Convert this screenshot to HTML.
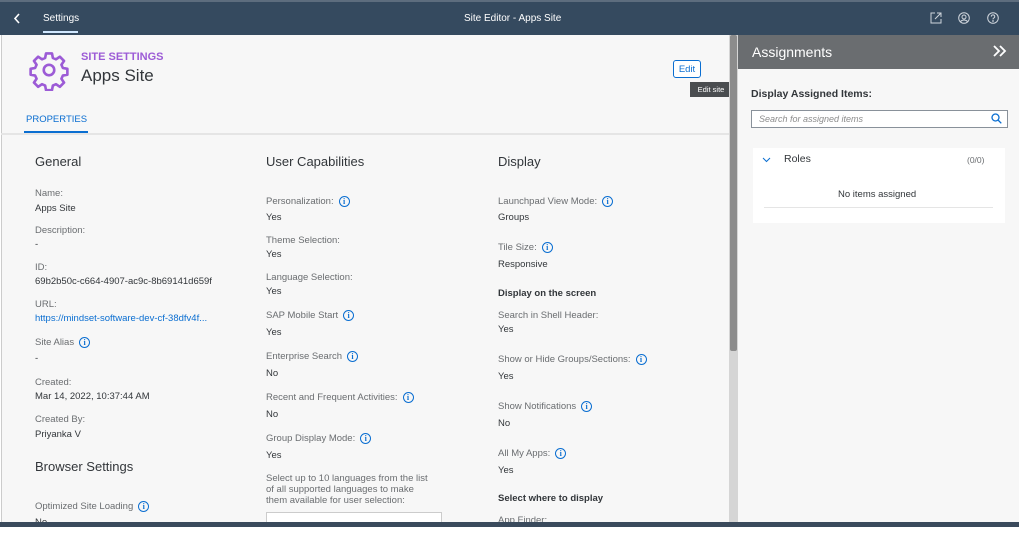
<!DOCTYPE html>
<html><head><meta charset="utf-8"><style>
*{margin:0;padding:0;box-sizing:border-box}
body{width:1024px;height:540px;background:#fff;font-family:"Liberation Sans",sans-serif;position:relative;overflow:hidden}
.a{position:absolute;white-space:nowrap;line-height:14px}
.l{font-size:9.5px;color:#6a6d70}
.v{font-size:9.5px;color:#32363a}
.h{font-size:13px;color:#32363a;line-height:16px}
.b{font-size:9.5px;color:#32363a;font-weight:bold}
.i{display:inline-block;width:11px;height:11px;border:1px solid #0a6ed1;border-radius:50%;font-size:8px;line-height:9px;text-align:center;color:#0a6ed1;margin-left:5px;vertical-align:middle;font-family:"Liberation Serif",serif;font-weight:bold}
.c{position:absolute;left:0;top:1px;width:729px;height:521px;overflow:hidden}
</style></head><body>
<div style="position:absolute;left:0;top:0;width:1019px;height:35px;background:#354a5f;border-top:2px solid #5d6d7e"></div>
<svg style="position:absolute;left:13px;top:13px" width="8" height="11" viewBox="0 0 8 11" fill="none" stroke="#fff" stroke-width="1.6"><path d="M6 1L2 5.5 6 10"/></svg>
<div class="a" style="left:43px;top:12px;color:#fff;font-size:10px">Settings</div>
<div style="position:absolute;left:43px;top:31px;width:35px;height:2px;background:#d1e8ff"></div>
<div class="a" style="left:464px;top:12px;color:#fff;font-size:10px">Site Editor - Apps Site</div>
<svg style="position:absolute;left:930px;top:12px" width="12" height="12" viewBox="0 0 12 12" fill="none" stroke="#cfd5dc" stroke-width="1"><path d="M5 1H1v10h10V7M7 1h4v4M11 1L5 7"/></svg>
<svg style="position:absolute;left:958px;top:12px" width="12" height="12" viewBox="0 0 12 12" fill="none" stroke="#cfd5dc"><circle cx="6" cy="6" r="5.3"/><circle cx="6" cy="5" r="2"/><path d="M2.5 9.5c2-2 5-2 7 0"/></svg>
<svg style="position:absolute;left:987px;top:12px" width="12" height="12" viewBox="0 0 12 12" fill="none" stroke="#cfd5dc"><circle cx="6" cy="6" r="5.3"/><path d="M4.3 4.6a1.7 1.7 0 1 1 2.4 1.5c-.6.3-.7.7-.7 1.3"/><circle cx="6" cy="9" r=".4"/></svg>
<div style="position:absolute;left:1px;top:35px;width:728px;height:487px;background:#f7f7f7;border-left:1px solid #ccc"></div>
<div style="position:absolute;left:1px;top:133px;width:728px;height:2px;background:#e5e5e5"></div>
<svg style="position:absolute;left:28px;top:49px" width="42" height="42" viewBox="0 0 24 24" fill="none" stroke="#9c5bd6" stroke-width="1.5" stroke-linejoin="round"><path d="M10.3 2.5h3.4l.5 2.6 1.8.8 2.2-1.5 2.4 2.4-1.5 2.2.8 1.8 2.6.5v3.4l-2.6.5-.8 1.8 1.5 2.2-2.4 2.4-2.2-1.5-1.8.8-.5 2.6h-3.4l-.5-2.6-1.8-.8-2.2 1.5-2.4-2.4 1.5-2.2-.8-1.8-2.6-.5v-3.4l2.6-.5.8-1.8-1.5-2.2 2.4-2.4 2.2 1.5 1.8-.8z"/><circle cx="12" cy="12" r="3"/></svg>
<div class="a" style="left:81px;top:50px;font-size:11px;font-weight:bold;color:#9c5bd6">SITE SETTINGS</div>
<div class="a" style="left:81px;top:66px;font-size:17px;color:#32363a;line-height:20px">Apps Site</div>
<div style="position:absolute;left:673px;top:60px;width:28px;height:18px;border:1px solid #0a6ed1;border-radius:3px;background:#fff;font-size:9.5px;color:#0a6ed1;display:flex;align-items:center;justify-content:center">Edit</div>
<div style="position:absolute;left:690px;top:82px;width:42px;height:15px;background:#4a4d50;color:#fff;font-size:7.5px;display:flex;align-items:center;justify-content:center;white-space:nowrap">Edit site</div>
<div class="a" style="left:26px;top:113px;font-size:9.5px;color:#0a6ed1">PROPERTIES</div>
<div style="position:absolute;left:24px;top:131px;width:64px;height:2px;background:#0a6ed1"></div>
<div class="c">
<div class="a h" style="left:35px;top:153px">General</div>
<div class="a l" style="left:35px;top:186px">Name:</div><div class="a v" style="left:35px;top:201px">Apps Site</div>
<div class="a l" style="left:35px;top:223px">Description:</div><div class="a v" style="left:35px;top:237px">-</div>
<div class="a l" style="left:35px;top:260px">ID:</div><div class="a v" style="left:35px;top:274px">69b2b50c-c664-4907-ac9c-8b69141d659f</div>
<div class="a l" style="left:35px;top:297px">URL:</div><div class="a v" style="left:35px;top:311px;color:#0a6ed1">https://mindset-software-dev-cf-38dfv4f...</div>
<div class="a l" style="left:35px;top:335px">Site Alias<span class="i">i</span></div><div class="a v" style="left:35px;top:351px">-</div>
<div class="a l" style="left:35px;top:375px">Created:</div><div class="a v" style="left:35px;top:389px">Mar 14, 2022, 10:37:44 AM</div>
<div class="a l" style="left:35px;top:412px">Created By:</div><div class="a v" style="left:35px;top:427px">Priyanka V</div>
<div class="a h" style="left:35px;top:458px">Browser Settings</div>
<div class="a l" style="left:35px;top:499px">Optimized Site Loading<span class="i">i</span></div><div class="a v" style="left:35px;top:515px">No</div>

<div class="a h" style="left:266px;top:153px">User Capabilities</div>
<div class="a l" style="left:266px;top:194px">Personalization:<span class="i">i</span></div><div class="a v" style="left:266px;top:210px">Yes</div>
<div class="a l" style="left:266px;top:233px">Theme Selection:</div><div class="a v" style="left:266px;top:247px">Yes</div>
<div class="a l" style="left:266px;top:270px">Language Selection:</div><div class="a v" style="left:266px;top:284px">Yes</div>
<div class="a l" style="left:266px;top:308px">SAP Mobile Start<span class="i">i</span></div><div class="a v" style="left:266px;top:325px">Yes</div>
<div class="a l" style="left:266px;top:349px">Enterprise Search<span class="i">i</span></div><div class="a v" style="left:266px;top:366px">No</div>
<div class="a l" style="left:266px;top:390px">Recent and Frequent Activities:<span class="i">i</span></div><div class="a v" style="left:266px;top:407px">No</div>
<div class="a l" style="left:266px;top:431px">Group Display Mode:<span class="i">i</span></div><div class="a v" style="left:266px;top:448px">Yes</div>
<div class="a l" style="left:266px;top:472px;line-height:11px">Select up to 10 languages from the list<br>of all supported languages to make<br>them available for user selection:</div>
<div style="position:absolute;left:266px;top:511px;width:176px;height:20px;border:1px solid #ccc;background:#fff"></div>

<div class="a h" style="left:498px;top:153px">Display</div>
<div class="a l" style="left:498px;top:194px">Launchpad View Mode:<span class="i">i</span></div><div class="a v" style="left:498px;top:210px">Groups</div>
<div class="a l" style="left:498px;top:240px">Tile Size:<span class="i">i</span></div><div class="a v" style="left:498px;top:257px">Responsive</div>
<div class="a b" style="left:498px;top:286px">Display on the screen</div>
<div class="a l" style="left:498px;top:308px">Search in Shell Header:</div><div class="a v" style="left:498px;top:322px">Yes</div>
<div class="a l" style="left:498px;top:352px">Show or Hide Groups/Sections:<span class="i">i</span></div><div class="a v" style="left:498px;top:369px">Yes</div>
<div class="a l" style="left:498px;top:399px">Show Notifications<span class="i">i</span></div><div class="a v" style="left:498px;top:416px">No</div>
<div class="a l" style="left:498px;top:446px">All My Apps:<span class="i">i</span></div><div class="a v" style="left:498px;top:463px">Yes</div>
<div class="a b" style="left:498px;top:491px">Select where to display</div>
<div class="a l" style="left:498px;top:513px">App Finder:</div>
</div>
<div style="position:absolute;left:729px;top:35px;width:9px;height:487px;background:#d5d5d5"></div>
<div style="position:absolute;left:730px;top:35px;width:7px;height:316px;background:#8c8c8c;border-radius:2px"></div>
<div style="position:absolute;left:738px;top:35px;width:281px;height:487px;background:#f7f7f7"></div>
<div style="position:absolute;left:738px;top:35px;width:281px;height:34px;background:#6a6d70"></div>
<div class="a" style="left:752px;top:43px;color:#fff;font-size:14px;line-height:18px">Assignments</div>
<svg style="position:absolute;left:993px;top:45px" width="14" height="12" viewBox="0 0 14 12" fill="none" stroke="#fff" stroke-width="1.8"><path d="M1 1l5 5-5 5M7 1l5 5-5 5"/></svg>
<div class="a" style="left:751px;top:87px;font-size:10.5px;font-weight:bold;color:#32363a">Display Assigned Items:</div>
<div style="position:absolute;left:751px;top:110px;width:257px;height:18px;border:1px solid #89919a;background:#fff"></div>
<div class="a" style="left:759px;top:112px;font-size:9px;font-style:italic;color:#8c8c8c">Search for assigned items</div>
<svg style="position:absolute;left:991px;top:113px" width="11" height="11" viewBox="0 0 11 11" fill="none" stroke="#0a6ed1" stroke-width="1.3"><circle cx="4.5" cy="4.5" r="3.5"/><path d="M7 7l3.3 3.3"/></svg>
<div style="position:absolute;left:753px;top:148px;width:252px;height:75px;background:#fff"></div>
<svg style="position:absolute;left:762px;top:157px" width="9" height="6" viewBox="0 0 9 6" fill="none" stroke="#0a6ed1" stroke-width="1"><path d="M1 1l3.5 3.5L8 1"/></svg>
<div class="a" style="left:784px;top:152px;font-size:10.5px;color:#32363a">Roles</div>
<div class="a" style="left:967px;top:153px;font-size:8.5px;color:#6a6d70">(0/0)</div>
<div class="a" style="left:838px;top:188px;font-size:9.5px;color:#32363a">No items assigned</div>
<div style="position:absolute;left:764px;top:207px;width:229px;height:1px;background:#e5e5e5"></div>
<div style="position:absolute;left:0;top:522px;width:1019px;height:5px;background:#3a4a5c"></div>
</body></html>
